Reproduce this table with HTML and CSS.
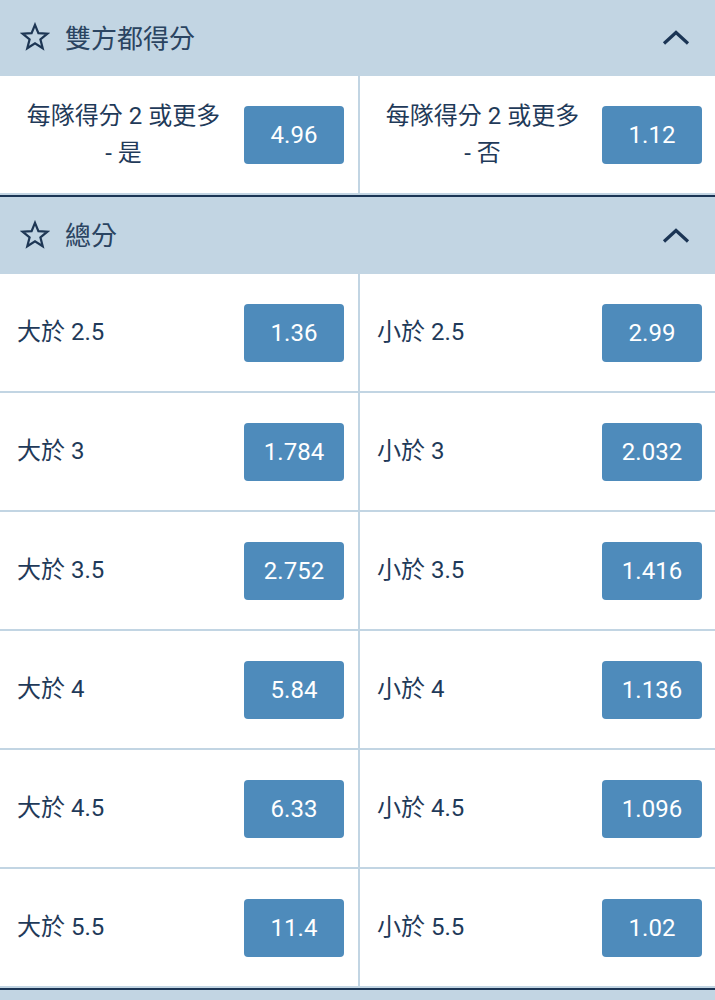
FILE: index.html
```html
<!DOCTYPE html>
<html lang="zh-Hant">
<head>
<meta charset="utf-8">
<title>盤口</title>
<link rel="stylesheet" href="styles.css">
</head>
<body>
<section class="market market-first">
  <header class="market-head">
    <svg class="star" viewBox="0 0 30 30" aria-hidden="true"><path d="M15 2.8 L18.4 11.2 L27.4 11.7 L20.4 17.4 L22.7 26.2 L15 21.3 L7.3 26.2 L9.6 17.4 L2.6 11.7 L11.6 11.2 Z"/></svg>
    <span class="market-title">雙方都得分</span>
    <svg class="chev" viewBox="0 0 28 16" aria-hidden="true"><path d="M2 13.5 L14 2.5 L26 13.5"/></svg>
  </header>
  <div class="rows">
    <div class="cell"><span class="label label-center">每隊得分 2 或更多<br>- 是</span><span class="odd">4.96</span></div>
    <div class="cell"><span class="label label-center">每隊得分 2 或更多<br>- 否</span><span class="odd">1.12</span></div>
  </div>
</section>
<section class="market">
  <header class="market-head">
    <svg class="star" viewBox="0 0 30 30" aria-hidden="true"><path d="M15 2.8 L18.4 11.2 L27.4 11.7 L20.4 17.4 L22.7 26.2 L15 21.3 L7.3 26.2 L9.6 17.4 L2.6 11.7 L11.6 11.2 Z"/></svg>
    <span class="market-title">總分</span>
    <svg class="chev" viewBox="0 0 28 16" aria-hidden="true"><path d="M2 13.5 L14 2.5 L26 13.5"/></svg>
  </header>
  <div class="rows">
    <div class="cell"><span class="label">大於 2.5</span><span class="odd">1.36</span></div>
    <div class="cell"><span class="label">小於 2.5</span><span class="odd">2.99</span></div>
    <div class="cell"><span class="label">大於 3</span><span class="odd">1.784</span></div>
    <div class="cell"><span class="label">小於 3</span><span class="odd">2.032</span></div>
    <div class="cell"><span class="label">大於 3.5</span><span class="odd">2.752</span></div>
    <div class="cell"><span class="label">小於 3.5</span><span class="odd">1.416</span></div>
    <div class="cell"><span class="label">大於 4</span><span class="odd">5.84</span></div>
    <div class="cell"><span class="label">小於 4</span><span class="odd">1.136</span></div>
    <div class="cell"><span class="label">大於 4.5</span><span class="odd">6.33</span></div>
    <div class="cell"><span class="label">小於 4.5</span><span class="odd">1.096</span></div>
    <div class="cell"><span class="label">大於 5.5</span><span class="odd">11.4</span></div>
    <div class="cell"><span class="label">小於 5.5</span><span class="odd">1.02</span></div>
  </div>
</section>
<section class="market">
  <header class="market-head"></header>
</section>
</body>
</html>
```
FILE: styles.css
```css
html, body {
  margin: 0;
  padding: 0;
  background: #ffffff;
}
body {
  width: 715px;
  font-family: Roboto, "Noto Sans CJK TC", sans-serif;
  color: #1f3a59;
  overflow: hidden;
}
.market {
  border-top: 2px solid #1b3555;
}
.market-first {
  border-top: none;
}
.market-head {
  display: flex;
  align-items: center;
  height: 77px;
  padding: 0 25px 0 20px;
  background: #c2d5e3;
  box-sizing: border-box;
}
.market-first .market-head {
  height: 76px;
}
.star {
  width: 30px;
  height: 30px;
  fill: none;
  stroke: #1d3654;
  stroke-width: 2.2;
  stroke-linejoin: miter;
  flex: none;
  margin-bottom: 2px;
}
.market-title {
  margin-left: 15px;
  font-size: 26px;
  color: #2a4461;
  flex: 1;
  padding-bottom: 4px;
}
.chev {
  width: 28px;
  height: 16px;
  fill: none;
  stroke: #1b3555;
  stroke-width: 3.2;
  flex: none;
}
.rows {
  display: grid;
  grid-template-columns: 360px 1fr;
}
.cell {
  display: flex;
  align-items: center;
  height: 119px;
  box-sizing: border-box;
  padding: 0 13px 0 17px;
  border-bottom: 2px solid #c2d5e3;
}
.cell:nth-child(odd) {
  border-right: 2px solid #c2d5e3;
  padding-right: 14px;
}
.label {
  flex: 1;
  font-size: 24px;
  line-height: 37px;
  margin-right: 14px;
}
.label-center {
  text-align: center;
}
.odd {
  flex: none;
  width: 100px;
  height: 58px;
  display: flex;
  align-items: center;
  justify-content: center;
  background: #4e8bbb;
  color: #ffffff;
  border-radius: 4px;
  font-size: 24px;
}
```
